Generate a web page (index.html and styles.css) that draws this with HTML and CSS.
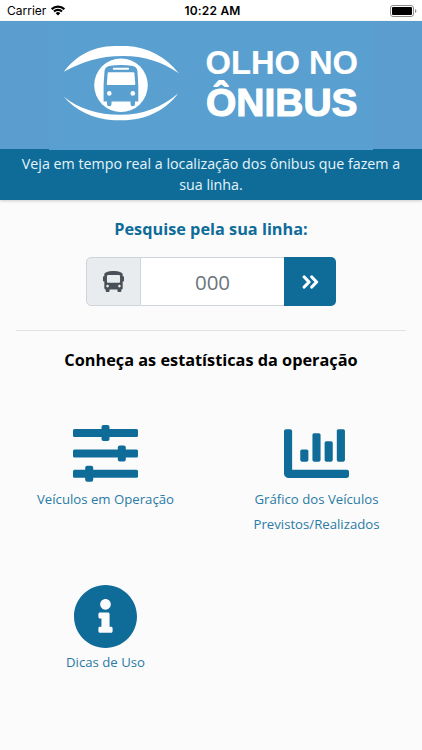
FILE: index.html
```html
<!DOCTYPE html>
<html lang="pt-BR">
<head>
    <meta charset="UTF-8">
    <meta name="viewport" content="width=device-width, initial-scale=1">
    <title>Olho no Ônibus</title>
    <link rel="stylesheet" href="styles.css">
</head>
<body>
    <div class="status-bar">
        <div class="carrier">
            <span>Carrier</span>
            <svg width="14" height="11" viewBox="0 0 14 11">
                <g fill="none" stroke="#000" stroke-width="2.2">
                    <path d="M0.700 4.200 A8.900 8.900 0 0 1 13.300 4.200"/>
                    <path d="M3 6.600 A5.600 5.600 0 0 1 11 6.600"/>
                </g>
                <path d="M7 10.600 L4.700 8.200 A3.300 3.300 0 0 1 9.300 8.200 Z"/>
            </svg>
        </div>
        <span class="clock">10:22 AM</span>
        <svg class="battery" width="27" height="12" viewBox="0 0 27 12">
            <rect x="0.5" y="0.5" width="23" height="11" rx="2.5" fill="none" stroke="#8c8c8c"/>
            <rect x="2" y="2" width="20" height="8" rx="1"/>
            <path d="M25 4 Q26.4 4.6 26.4 6 Q26.4 7.4 25 8 Z" fill="#8c8c8c"/>
        </svg>
    </div>

    <header>
        <div class="banner">
            <svg class="logo" width="324" height="129" viewBox="49 21 324 129">
                <g fill="#fff">
                    <path d="M63.8 71.8 C74 58 91 46 115 46 H127 C148 47 166 57 178.8 73.2 C162 62 145 56 123 56 C99 56 82 62 63.8 71.8 Z"/>
                    <path d="M63.8 96.8 C79 109 98 114.8 120 114.8 C143 114.8 162 107 178.3 93.2 C166 110 146 120.3 122 120.3 H114 C93 119 76 111 63.8 96.8 Z"/>
                    <circle cx="121" cy="85.2" r="26.8"/>
                </g>
                <path d="M104.5 71 Q105 67 109 66 Q121 63.8 133 66 Q137 67 137.4 71 L138.3 85 V101.5 H135 V104 Q135 106.2 132.8 106.2 Q130.5 106.2 130.5 104 V101.5 H111.5 V104 Q111.5 106.2 109.2 106.2 Q107 106.2 107 104 V101.5 H103.6 V85 Z" fill="#599fcf"/>
                <g fill="#fff">
                    <rect x="112.8" y="67.8" width="16.3" height="2" rx="1"/>
                    <path d="M108.6 72.2 H133.4 Q134.3 72.2 134.4 73 L135.3 84 Q135.3 85 134.3 85 H107.6 Q106.7 85 106.8 84 L107.7 73 Q107.8 72.2 108.6 72.2 Z"/>
                    <circle cx="109.3" cy="93.4" r="2.3"/>
                    <circle cx="132.8" cy="93.4" r="2.3"/>
                    <text class="logo-top" x="205.5" y="74" textLength="152.500" lengthAdjust="spacingAndGlyphs">OLHO NO</text>
                    <text class="logo-bottom" x="206" y="115.500" textLength="151.500" lengthAdjust="spacingAndGlyphs">ÔNIBUS</text>
                </g>
            </svg>
        </div>
        <p class="tagline">Veja em tempo real a localização dos ônibus que fazem a sua linha.</p>
    </header>

    <main>
        <h2 class="search-title">Pesquise pela sua linha:</h2>
        <form class="search">
            <label class="search-icon" for="linha">
                <svg width="21" height="21" viewBox="0 0 512 512">
                    <path fill="#495057" d="M488 128h-8V80c0-44.800-99.200-80-224-80S32 35.200 32 80v48h-8c-13.250 0-24 10.740-24 24v80c0 13.250 10.750 24 24 24h8v160c0 17.670 14.330 32 32 32v32c0 17.670 14.330 32 32 32h32c17.670 0 32-14.330 32-32v-32h192v32c0 17.670 14.330 32 32 32h32c17.670 0 32-14.330 32-32v-32h6.400c16 0 25.600-12.800 25.600-25.600V256h8c13.250 0 24-10.750 24-24v-80c0-13.260-10.750-24-24-24zM112 400c-17.670 0-32-14.330-32-32s14.330-32 32-32 32 14.330 32 32-14.330 32-32 32zm16-112c-17.670 0-32-14.330-32-32V128c0-17.670 14.330-32 32-32h256c17.670 0 32 14.330 32 32v128c0 17.670-14.330 32-32 32H128zm272 112c-17.670 0-32-14.330-32-32s14.330-32 32-32 32 14.330 32 32-14.330 32-32 32z"/>
                </svg>
            </label>
            <input type="text" id="linha" name="linha" placeholder="000">
            <button type="submit" aria-label="Buscar">
                <svg width="17" height="14" viewBox="0 0 17 14">
                    <path d="M2.2 2 L7 7 L2.2 12 M9.8 2 L14.6 7 L9.8 12" fill="none" stroke="#fff" stroke-width="3.2" stroke-linecap="round" stroke-linejoin="round"/>
                </svg>
            </button>
        </form>
        <hr>
        <h2 class="stats-title">Conheça as estatísticas da operação</h2>

        <nav class="menu">
            <a href="#">
                <svg width="65" height="65" viewBox="0.500 0.500 65 65">
                    <g fill="#0f6c99">
                        <rect x="0.500" y="8.500" width="65" height="8" rx="1.500"/>
                        <rect x="29" y="4.500" width="8" height="16" rx="2"/>
                        <rect x="0.500" y="29" width="65" height="8" rx="1.500"/>
                        <rect x="45.300" y="25" width="8" height="16" rx="2"/>
                        <rect x="0.500" y="49.300" width="65" height="8" rx="1.500"/>
                        <rect x="12.700" y="45.300" width="8" height="16" rx="2"/>
                    </g>
                </svg>
                <span>Veículos em Operação</span>
            </a>
            <a href="#">
                <svg width="65" height="65" viewBox="0 0 512 512">
                    <path fill="#0f6c99" d="M332.800 320h38.400c6.400 0 12.800-6.400 12.800-12.800V172.800c0-6.400-6.400-12.800-12.800-12.800h-38.400c-6.400 0-12.800 6.400-12.800 12.800v134.400c0 6.400 6.400 12.800 12.800 12.800zm96 0h38.400c6.400 0 12.800-6.400 12.800-12.800V76.800c0-6.400-6.400-12.800-12.800-12.800h-38.400c-6.400 0-12.800 6.400-12.800 12.800v230.400c0 6.400 6.400 12.800 12.800 12.800zm-288 0h38.400c6.400 0 12.800-6.400 12.800-12.800v-70.400c0-6.400-6.400-12.800-12.800-12.800h-38.400c-6.400 0-12.800 6.400-12.800 12.800v70.400c0 6.400 6.400 12.800 12.800 12.800zm96 0h38.400c6.400 0 12.800-6.400 12.800-12.800V108.800c0-6.400-6.400-12.800-12.800-12.800h-38.400c-6.400 0-12.800 6.400-12.800 12.800v198.400c0 6.400 6.400 12.800 12.800 12.800zM496 384H64V80c0-8.840-7.160-16-16-16H16C7.160 64 0 71.160 0 80v336c0 17.670 14.330 32 32 32h464c8.840 0 16-7.160 16-16v-32c0-8.840-7.160-16-16-16z"/>
                </svg>
                <span>Gráfico dos Veículos Previstos/Realizados</span>
            </a>
            <a href="#">
                <svg width="65" height="65" viewBox="0 0 512 512">
                    <path fill="#0f6c99" d="M256 8C119.043 8 8 119.083 8 256c0 136.997 111.043 248 248 248s248-111.003 248-248C504 119.083 392.957 8 256 8zm0 110c23.196 0 42 18.804 42 42s-18.804 42-42 42-42-18.804-42-42 18.804-42 42-42zm56 254c0 6.627-5.373 12-12 12h-88c-6.627 0-12-5.373-12-12v-24c0-6.627 5.373-12 12-12h12v-64h-12c-6.627 0-12-5.373-12-12v-24c0-6.627 5.373-12 12-12h64c6.627 0 12 5.373 12 12v100h12c6.627 0 12 5.373 12 12v24z"/>
                </svg>
                <span>Dicas de Uso</span>
            </a>
        </nav>
    </main>
</body>
</html>
```
FILE: styles.css
```css
* {
    margin: 0;
    padding: 0;
    box-sizing: border-box;
}

body {
    font-family: "Open Sans", "Noto Sans", sans-serif;
    background-color: #fbfbfb;
    color: #000;
}

svg {
    display: block;
}

/* Phone status bar */
.status-bar {
    display: grid;
    grid-template-columns: 1fr auto 1fr;
    align-items: center;
    height: 21px;
    padding: 0 5px 0 7px;
    background-color: #fff;
    font-family: Inter, sans-serif;
    font-size: 12px;
}

.carrier {
    display: flex;
    align-items: center;
    gap: 5px;
}

.clock {
    padding-left: 1px;
    font-weight: 600;
    letter-spacing: 0.2px;
}

.battery {
    justify-self: end;
}

/* Header with the logo and the tagline */
header {
    background-color: #0f6c99;
    box-shadow: 0 1px 3px rgba(0, 0, 0, 0.2);
}

.banner {
    height: 128px;
    background-color: #5b9dcf;
}

.logo {
    margin: 0 auto;
    background-color: #599fcf;
}

.logo-top,
.logo-bottom {
    font-family: "Liberation Sans", Arial, sans-serif;
    font-weight: bold;
    stroke: #fff;
}

.logo-top {
    font-size: 33px;
    stroke-width: 0.2px;
}

.logo-bottom {
    font-size: 39.5px;
    stroke-width: 1.2px;
}

.tagline {
    padding: 4px 16px 5px;
    color: #e6f4fa;
    font-size: 14.25px;
    line-height: 21px;
    text-align: center;
}

/* Line search */
main {
    padding: 0 16px;
}

h2 {
    font-size: 16.3px;
    line-height: 24px;
    text-align: center;
}

.search-title {
    margin-top: 17px;
    color: #0f6c99;
}

.search {
    display: flex;
    width: 250px;
    height: 49px;
    margin: 16px auto 24px;
}

.search-icon {
    display: flex;
    align-items: center;
    justify-content: center;
    width: 55px;
    padding-bottom: 1px;
    background-color: #e9ecef;
    border: 1px solid #ced4da;
    border-radius: 5px 0 0 5px;
}

.search input {
    flex: 1;
    min-width: 0;
    background-color: #fff;
    border: 1px solid #ced4da;
    border-width: 1px 0;
    font-family: inherit;
    font-size: 20.5px;
    text-align: center;
}

.search input::placeholder {
    color: #6c757d;
}

.search button {
    display: flex;
    align-items: center;
    justify-content: center;
    width: 52px;
    background-color: #0f6c99;
    border: none;
    border-radius: 0 5px 5px 0;
}

hr {
    border: none;
    border-top: 1px solid #e3e3e3;
}

.stats-title {
    margin-top: 17px;
}

/* Shortcuts */
.menu {
    display: grid;
    grid-template-columns: 1fr 1fr;
    row-gap: 48px;
    margin: 49px -16px 0;
}

.menu a {
    display: flex;
    flex-direction: column;
    align-items: center;
    gap: 1px;
    color: #2a7aa5;
    font-size: 13.2px;
    line-height: 24.5px;
    text-align: center;
    text-decoration: none;
}

.menu span {
    max-width: 150px;
}
```
